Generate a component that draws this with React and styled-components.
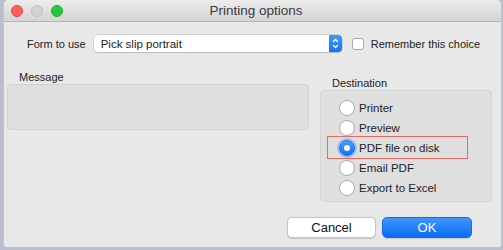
import React from 'react'
import styled, { createGlobalStyle } from 'styled-components'

const Global = createGlobalStyle`
  html, body {
    margin: 0;
    padding: 0;
    background: #b9bfd0;
    font-family: 'Liberation Sans', Arial, sans-serif;
  }
`

const Page = styled.div`
  width: 503px;
  height: 250px;
  overflow: hidden;
`
const Window = styled.div`
  margin-left: 3px;
  width: 497px;
  height: 247px;
  background: #e8e8e8;
  border: 1px solid #c4c4c4;
  border-top: none;
  border-radius: 5px 5px 4px 4px;
  display: flex;
  flex-direction: column;
  color: #222;
  font-size: 11px;
`
const TitleBar = styled.div`
  height: 21px;
  flex: none;
  display: flex;
  align-items: center;
  background: linear-gradient(#ececec, #d4d4d4);
  border-bottom: 1px solid #b6b6b6;
  border-radius: 5px 5px 0 0;
  padding-left: 7px;
  gap: 8px;
`
const Light = styled.span`
  width: 12px;
  height: 12px;
  border-radius: 50%;
  box-sizing: border-box;
  background: ${(p) => p.color};
  border: 0.5px solid ${(p) => p.edge};
`
const Title = styled.div`
  flex: 1;
  text-align: center;
  font-size: 13.5px;
  color: #3a3a3a;
  margin-right: 56px;
  margin-left: -4px;
`
const FormRow = styled.div`
  display: flex;
  align-items: center;
  margin-top: 13px;
  padding-left: 23px;
  height: 17px;
`
const Label = styled.span`
  margin-right: 8px;
`
const Select = styled.div`
  width: 248px;
  height: 17px;
  box-sizing: border-box;
  background: #fff;
  border-radius: 4px;
  box-shadow: 0 0 0 0.5px #bdbdbd, 0 0.5px 1px rgba(0, 0, 0, 0.2);
  display: flex;
  align-items: center;
  overflow: hidden;
  font-size: 11.5px;
`
const SelectText = styled.span`
  flex: 1;
  padding-left: 7px;
`
const Stepper = styled.span`
  width: 13px;
  height: 100%;
  background: linear-gradient(#3f99fc, #1670f3);
  display: flex;
  align-items: center;
  justify-content: center;
`
const Check = styled.span`
  width: 12px;
  height: 12px;
  box-sizing: border-box;
  margin-left: 10px;
  margin-right: 7px;
  background: #fff;
  border: 1px solid #a9a9a9;
  border-radius: 3px;
`
const Panels = styled.div`
  display: grid;
  grid-template-columns: 302px 172px;
  column-gap: 11px;
  align-items: start;
  padding-left: 3px;
  margin-top: 19px;
`
const Group = styled.div`
  margin-top: ${(p) => p.offset || 0}px;
`
const GroupLabel = styled.div`
  line-height: 13px;
  padding-left: ${(p) => p.indent}px;
`
const Box = styled.div`
  box-sizing: border-box;
  height: ${(p) => p.h}px;
  background: #dfdfdf;
  border: 1px solid #d3d3d3;
  border-radius: 4px;
  padding: 7px 0 0 18px;
`
const Option = styled.div`
  height: 20px;
  display: flex;
  align-items: center;
  gap: 4px;
  position: relative;
  font-size: 11.5px;
  ${(p) =>
    p.marked &&
    `
    &::after {
      content: '';
      position: absolute;
      left: -12px;
      top: -2px;
      width: 141px;
      height: 23px;
      box-sizing: border-box;
      border: 1.5px solid #ea6a5f;
    }
  `}
`
const Radio = styled.span`
  width: 16px;
  height: 16px;
  box-sizing: border-box;
  border-radius: 50%;
  display: flex;
  align-items: center;
  justify-content: center;
  background: ${(p) => (p.on ? 'linear-gradient(#4aa0fd, #1570f4)' : '#fff')};
  border: ${(p) => (p.on ? '1px solid #1b6fe6' : '1px solid #ababab')};
  box-shadow: ${(p) => (p.on ? '0 0 0 2px rgba(80,150,250,0.45)' : 'none')};
  &::before {
    content: '';
    display: ${(p) => (p.on ? 'block' : 'none')};
    width: 6px;
    height: 6px;
    border-radius: 50%;
    background: #fff;
  }
`
const Buttons = styled.div`
  display: flex;
  justify-content: flex-end;
  gap: 6px;
  padding-right: 29px;
  margin-top: 15px;
`
const Button = styled.button`
  width: ${(p) => p.w}px;
  height: 21px;
  padding: 0;
  font-family: inherit;
  font-size: 13px;
  border-radius: 5px;
  color: ${(p) => (p.primary ? '#fff' : '#111')};
  background: ${(p) =>
    p.primary ? 'linear-gradient(#3e96fd, #0a6cf5)' : '#fff'};
  border: ${(p) => (p.primary ? '1px solid #1a6ae8' : '1px solid #c6c6c6')};
  box-shadow: 0 0.5px 1px rgba(0, 0, 0, 0.15);
`

const options = ['Printer', 'Preview', 'PDF file on disk', 'Email PDF', 'Export to Excel']

export default function App() {
  return (
    <Page>
      <Global />
      <Window>
        <TitleBar>
          <Light color="#fe5f57" edge="#e0443e" />
          <Light color="#d2d2d2" edge="#c0c0c0" />
          <Light color="#29c73f" edge="#1dad2b" />
          <Title>Printing options</Title>
        </TitleBar>
        <FormRow>
          <Label>Form to use</Label>
          <Select>
            <SelectText>Pick slip portrait</SelectText>
            <Stepper>
              <svg width="7" height="11" viewBox="0 0 7 11">
                <path d="M1 4 L3.5 1.5 L6 4 M1 7 L3.5 9.5 L6 7" fill="none" stroke="#fff" strokeWidth="1.3" />
              </svg>
            </Stepper>
          </Select>
          <Check />
          <span>Remember this choice</span>
        </FormRow>
        <Panels>
          <Group>
            <GroupLabel indent={12}>Message</GroupLabel>
            <Box h={46} />
          </Group>
          <Group offset={6}>
            <GroupLabel indent={12}>Destination</GroupLabel>
            <Box h={112}>
              {options.map((o, i) => (
                <Option key={o} marked={i === 2}>
                  <Radio on={i === 2} />
                  {o}
                </Option>
              ))}
            </Box>
          </Group>
        </Panels>
        <Buttons>
          <Button w={89}>Cancel</Button>
          <Button w={90} primary>
            OK
          </Button>
        </Buttons>
      </Window>
    </Page>
  )
}
